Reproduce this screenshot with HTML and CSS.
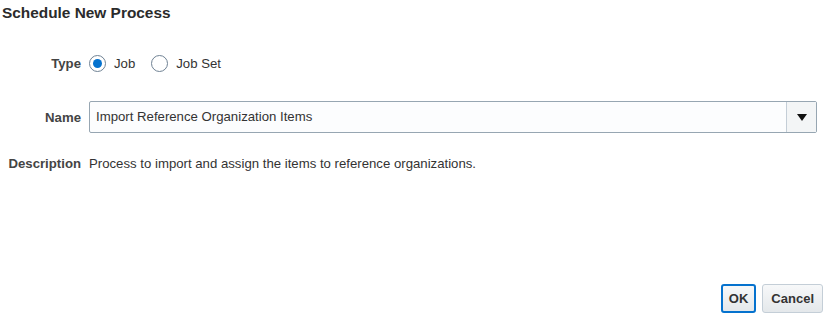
FILE: index.html
```html
<!DOCTYPE html>
<html>
<head>
  <link rel="stylesheet" href="styles.css">
</head>
<body>

<div class="dialog">
  <h1 class="title">Schedule New Process</h1>

  <div class="form">
    <!-- Тип -->
    <div class="row row-type">
      <span class="label">Type</span>
      <div class="field radios">
        <label class="radio">
          <span class="dot checked"></span>
          <span>Job</span>
        </label>
        <label class="radio">
          <span class="dot"></span>
          <span>Job Set</span>
        </label>
      </div>
    </div>

    <!-- Имя -->
    <div class="row row-name">
      <span class="label">Name</span>
      <div class="field">
        <div class="select">
          <span class="select-text">Import Reference Organization Items</span>
          <span class="select-btn">
            <svg width="10" height="7" viewBox="0 0 10 7"><path d="M0 0h10L5 7z" fill="#111"/></svg>
          </span>
        </div>
      </div>
    </div>

    <!-- Описание -->
    <div class="row row-desc">
      <span class="label">Description</span>
      <div class="field">Process to import and assign the items to reference organizations.</div>
    </div>
  </div>

  <div class="buttons">
    <button class="btn btn-ok">OK</button>
    <button class="btn">Cancel</button>
  </div>
</div>

</body>
</html>
```

FILE: styles.css
```css
body {
  margin: 0;
  font-family: "Liberation Sans", Arial, sans-serif;
  color: #333;
  background: #fff;
}

.dialog {
  width: 832px;
  height: 324px;
  display: flex;
  flex-direction: column;
}

.title {
  margin: 0;
  padding: 4px 0 0 2px;
  font-size: 15.4px;
  line-height: 18px;
  font-weight: bold;
  color: #2b2b2b;
}

/* Форма */
.form {
  padding-top: 29px;
  flex: 1;
}
.row {
  display: flex;
  align-items: center;
  font-size: 13.2px;
}
.label {
  width: 81px;
  text-align: right;
  font-weight: bold;
  color: #444;
  flex-shrink: 0;
}
.field {
  margin-left: 8px;
  flex: 1;
}
.row-type {
  height: 24px;
}
.row-name {
  margin-top: 26px;
  margin-right: 15px;
}
.row-desc {
  margin-top: 23px;
}

/* Радио-кнопки */
.radios {
  display: flex;
}
.radio {
  display: flex;
  align-items: center;
  margin-right: 16px;
}
.dot {
  width: 15px;
  height: 15px;
  border: 1px solid #6f8294;
  border-radius: 50%;
  margin-right: 8px;
  position: relative;
  background: #fff;
}
.dot.checked:before {
  content: "";
  position: absolute;
  width: 9px;
  height: 9px;
  left: 3px;
  top: 3px;
  border-radius: 50%;
  background: #0572ce;
}

/* Выпадающий список */
.select {
  display: flex;
  height: 30px;
  border: 1px solid #97a6b2;
  border-radius: 2px;
  background: #fcfdfe;
}
.select-text {
  flex: 1;
  padding-left: 6px;
  line-height: 30px;
  color: #333;
}
.select-btn {
  width: 29px;
  border-left: 1px solid #c4ced7;
  background: #f3f5f6;
  display: flex;
  align-items: center;
  justify-content: center;
}

/* Кнопки */
.buttons {
  display: flex;
  justify-content: flex-end;
  gap: 6px;
  padding: 0 9px 11px 0;
}
.btn {
  height: 29px;
  padding: 0 8px;
  font-family: "Liberation Sans", Arial, sans-serif;
  font-size: 13px;
  font-weight: bold;
  color: #333;
  background: linear-gradient(#f7f8f9, #e4e8eb);
  border: 1px solid #c4ced7;
  border-radius: 3px;
}
.btn-ok {
  border: 2px solid #0572ce;
  padding: 0 6px;
}
```
